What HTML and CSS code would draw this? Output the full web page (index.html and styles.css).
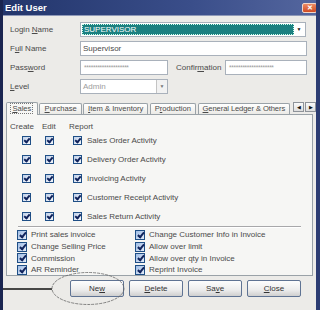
FILE: index.html
```html
<!DOCTYPE HTML>
<html lang="en">
<head>
    <meta charset="UTF-8">
    <title>Edit User</title>
    <link rel="stylesheet" href="styles.css">
</head>
<body>
    <div class="window">
        <div class="titlebar">
            <span class="title">Edit User</span>
            <span class="close">&#x2715;</span>
        </div>

        <div class="form">
            <div class="row">
                <label>Login <u>N</u>ame</label>
                <div class="combo login">
                    <span class="sel">SUPERVISOR</span>
                    <span class="arrow plain">&#9660;</span>
                </div>
            </div>
            <div class="row">
                <label>F<u>u</u>ll Name</label>
                <div class="field full">Supervisor</div>
            </div>
            <div class="row">
                <label>Pass<u>w</u>ord</label>
                <div class="field pwd">********************</div>
                <label class="conf">Confir<u>m</u>ation</label>
                <div class="field pwd2">********************</div>
            </div>
            <div class="row">
                <label><u>L</u>evel</label>
                <div class="combo level">
                    <span class="val">Admin</span>
                    <span class="arrow btn">&#9660;</span>
                </div>
            </div>
        </div>

        <div class="tabs">
            <span class="tab active t1"><span class="focus"><u>S</u>ales</span></span>
            <span class="tab t2"><u>P</u>urchase</span>
            <span class="tab t3"><u>I</u>tem &amp; Inventory</span>
            <span class="tab t4">P<u>r</u>oduction</span>
            <span class="tab t5"><u>G</u>eneral Ledger &amp; Others</span>
            <span class="scroll">
                <span class="sbtn">&#9664;</span><span class="sbtn">&#9654;</span>
            </span>
        </div>

        <div class="panel">
            <div class="head">
                <span class="h-create">Create</span>
                <span class="h-edit">Edit</span>
                <span>Report</span>
            </div>
            <div class="perm">
                <div class="prow"><i class="cb"></i><i class="cb"></i><i class="cb"></i><span>Sales Order Activity</span></div>
                <div class="prow"><i class="cb"></i><i class="cb"></i><i class="cb"></i><span>Delivery Order Activity</span></div>
                <div class="prow"><i class="cb"></i><i class="cb"></i><i class="cb"></i><span>Invoicing Activity</span></div>
                <div class="prow"><i class="cb"></i><i class="cb"></i><i class="cb"></i><span>Customer Receipt Activity</span></div>
                <div class="prow"><i class="cb"></i><i class="cb"></i><i class="cb"></i><span>Sales Return Activity</span></div>
            </div>
            <div class="sep"></div>
            <div class="opts">
                <div class="opt"><i class="cb big"></i>Print sales invoice</div>
                <div class="opt"><i class="cb big"></i>Change Customer Info in Invoice</div>
                <div class="opt"><i class="cb big"></i>Change Selling Price</div>
                <div class="opt"><i class="cb big"></i>Allow over limit</div>
                <div class="opt"><i class="cb big"></i>Commission</div>
                <div class="opt"><i class="cb big"></i>Allow over qty in Invoice</div>
                <div class="opt"><i class="cb big"></i>AR Reminder</div>
                <div class="opt"><i class="cb big"></i>Reprint Invoice</div>
            </div>
        </div>

        <div class="buttons">
            <span class="button">Ne<u>w</u></span>
            <span class="button"><u>D</u>elete</span>
            <span class="button">Sa<u>v</u>e</span>
            <span class="button"><u>C</u>lose</span>
        </div>

        <!-- hand drawn note over the New button -->
        <svg class="note" width="320" height="310" viewBox="0 0 320 310">
            <line x1="0" y1="289" x2="52" y2="289" stroke="#111" stroke-width="1.6"/>
            <ellipse cx="88" cy="288.5" rx="36" ry="16" fill="none" stroke="#666" stroke-width="0.8" stroke-dasharray="3 1"/>
        </svg>
    </div>
</body>
</html>
```

FILE: styles.css
```css
body{margin:0;font-family:"Liberation Sans",Arial,sans-serif;}
u{text-decoration:underline;}

.window{
    position:relative;
    box-sizing:border-box;
    width:320px;
    height:310px;
    border-left:3px solid #1a2550;
    border-right:4px solid #2c3c72;
    background-color:#ecebe8;
    color:#4a4a4a;
    font-size:8px;
    overflow:hidden;
}
.titlebar{
    display:flex;
    align-items:center;
    justify-content:space-between;
    height:16px;
    margin:0 -4px 0 -3px;
    padding:0 3px 0 5px;
    background:linear-gradient(to right,#22356b,#3a4e8a 60%,#55679f);
    border-bottom:1px solid #8f99b8;
    box-sizing:border-box;
}
.title{
    color:#fff;
    font-size:9.5px;
    font-weight:bold;
}
.close{
    display:flex;
    align-items:center;
    justify-content:center;
    width:15px;
    height:10px;
    border:1px solid #f2d6c8;
    border-radius:2px;
    background:linear-gradient(#ec8a64,#cf4a22);
    color:#fff;
    font-size:7px;
    font-weight:bold;
    box-sizing:border-box;
}

.form{
    display:flex;
    flex-direction:column;
    gap:4px;
    padding:6px 0 0 7px;
}
.row{
    display:flex;
    align-items:center;
    height:15px;
}
.row label{
    width:70px;
}
.row label.conf{
    width:49px;
    margin-left:8px;
}
.field,.combo{
    box-sizing:border-box;
    height:15px;
    border:1px solid #a9b1bb;
    background-color:#fff;
    line-height:13px;
    padding-left:2px;
}
.full{width:227px;}
.pwd,.pwd2{
    color:#9a9a9a;
    font-size:6.5px;
    letter-spacing:-0.3px;
    padding-left:3px;
}
.pwd{width:88px;}
.pwd2{width:82px;}
.combo{
    display:flex;
    padding:1px;
}
.combo.login{width:226px;}
.combo .sel{
    flex:1;
    background-color:#1b8080;
    color:#fff;
    padding-left:2px;
    line-height:11px;
    outline:1px dotted #cfe;
    outline-offset:-1px;
}
.combo .arrow{
    width:10px;
    text-align:center;
    font-size:5px;
    line-height:11px;
    color:#111;
}
.combo.level{width:88px;padding:0 0 0 2px;}
.combo .val{
    flex:1;
    color:#9c9c9c;
    line-height:13px;
}
.combo .arrow.btn{
    border-left:1px solid #c4c4c4;
    background-color:#f2f2f2;
    color:#777;
    line-height:13px;
}

.tabs{
    display:flex;
    align-items:flex-end;
    height:13px;
    margin-top:7px;
    padding-left:3px;
    font-size:7.6px;
}
.tab{
    box-sizing:border-box;
    height:11px;
    margin-right:1px;
    border:1px solid #9aa2a8;
    border-bottom:none;
    border-radius:2px 2px 0 0;
    background:linear-gradient(#fff,#ebeae6);
    line-height:10px;
    text-align:center;
    white-space:nowrap;
    overflow:hidden;
}
.t1{width:32px;}
.t2{width:44px;}
.t3{width:65px;margin-right:2px;}
.t4{width:46px;margin-right:2px;}
.t5{width:93px;letter-spacing:-0.1px;}
.tab.active{
    height:13px;
    margin-bottom:-1px;
    position:relative;
    background:#f7f7f5;
    padding-top:1px;
}
.tab .focus{
    outline:1px dotted #777;
    padding:0 1px;
}
.scroll{
    display:flex;
    gap:1px;
    margin-left:2px;
    margin-bottom:2px;
}
.sbtn{
    box-sizing:border-box;
    width:11px;
    height:10px;
    border:1px solid #8e9399;
    background:linear-gradient(#fafafa,#dedede);
    color:#111;
    font-size:5px;
    line-height:8px;
    text-align:center;
}

.panel{
    box-sizing:border-box;
    height:162px;
    margin:0 3px;
    padding:7px 3px 0;
    border:1px solid #9aa2a8;
    background-color:#f6f6f4;
}
.head{
    display:flex;
    height:9px;
    line-height:9px;
}
.h-create{width:32px;}
.h-edit{width:27px;}
.prow{
    display:flex;
    align-items:center;
    height:19px;
    padding-left:12px;
}
.prow .cb:nth-child(2){margin-left:14px;}
.prow .cb:nth-child(3){margin-left:19px;}
.prow span{margin-left:5px;}

.cb{
    position:relative;
    display:inline-block;
    box-sizing:border-box;
    width:9px;
    height:9px;
    border:1px solid #1f4f86;
    background:linear-gradient(135deg,#bfd0ea,#f4f7fb);
}
.cb::after{
    content:"";
    position:absolute;
    left:2px;
    top:0;
    width:2px;
    height:4px;
    border:solid #10235c;
    border-width:0 2px 2px 0;
    transform:rotate(40deg);
}
.cb.big{
    width:10px;
    height:10px;
    margin-right:4px;
    background:linear-gradient(135deg,#9fbde6,#e4ecf8);
}
.cb.big::after{left:2.5px;top:0;height:5px;}

.sep{
    margin:0 8px 0 8px;
    border-top:1px solid #a8a8aa;
    border-bottom:1px solid #fff;
}
.opts{
    display:grid;
    grid-template-columns:118px auto;
    grid-auto-rows:11.7px;
    padding:1px 0 0 7px;
}
.opt{
    display:flex;
    align-items:center;
    white-space:nowrap;
}

.buttons{
    display:flex;
    gap:5px;
    margin-top:4px;
    padding-left:67px;
}
.button{
    box-sizing:border-box;
    width:54px;
    height:17px;
    border:1px solid #5f7393;
    border-radius:2px;
    background:linear-gradient(#fdfdfd,#ececec 60%,#cfcfcf);
    text-align:center;
    line-height:15px;
    color:#333;
}

.note{
    position:absolute;
    left:-3px;
    top:0;
    pointer-events:none;
}
```
